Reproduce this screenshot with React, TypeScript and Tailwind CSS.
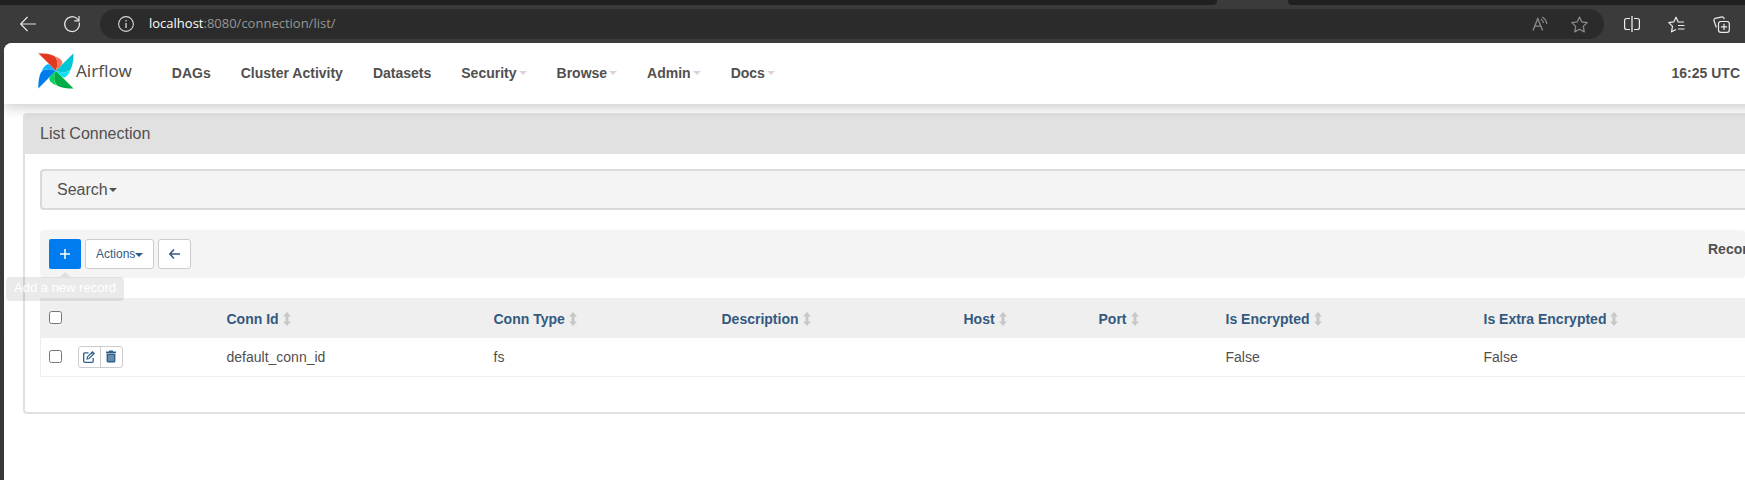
import React from "react";

const navItems = [
  { label: "DAGs", menu: false },
  { label: "Cluster Activity", menu: false },
  { label: "Datasets", menu: false },
  { label: "Security", menu: true },
  { label: "Browse", menu: true },
  { label: "Admin", menu: true },
  { label: "Docs", menu: true },
];

const columns = [
  { label: "Conn Id", width: "w-[267px]", value: "default_conn_id" },
  { label: "Conn Type", width: "w-[228px]", value: "fs" },
  { label: "Description", width: "w-[242px]", value: "" },
  { label: "Host", width: "w-[135px]", value: "" },
  { label: "Port", width: "w-[127px]", value: "" },
  { label: "Is Encrypted", width: "w-[258px]", value: "False" },
  { label: "Is Extra Encrypted", width: "", value: "False" },
];

function Caret({ className = "" }: { className?: string }) {
  return (
    <span
      aria-hidden="true"
      className={`inline-block border-x-4 border-t-4 border-x-transparent ${className}`}
    />
  );
}

function SortIcon() {
  return (
    <svg viewBox="0 0 8 14" className="h-[14px] w-2 fill-[#c8c8c8]" aria-hidden="true">
      <path d="M4 0 L8 4.600 H5.500 V9.400 H8 L4 14 L0 9.400 H2.500 V4.600 H0 Z" />
    </svg>
  );
}

function Pinwheel() {
  return (
    <svg viewBox="0 0 36 36" className="size-9" aria-hidden="true">
      <path fill="#017cee" d="M0.3 35.6 L17.8 17.8 C12 15.5 5.500 15.500 3 19.500 C1 23 0.3 29 0.3 35.6Z" />
      <path fill="#0cb6ff" d="M17.8 17.8 C13 13 11.500 10.500 9 11.500 C7 12.500 5 15 3.500 18.500 C7 15.500 12 15.500 17.8 17.800Z" />
      <path fill="#04d659" d="M17.8 17.8 C13 22.500 10.500 24.500 11.500 27 C12.500 29.500 15.500 31.500 18.800 32.500 C15.500 29 15.800 23.500 17.800 17.800Z" />
      <path fill="#00ad46" d="M35.5 35.5 L17.8 17.8 C15.500 23.500 15.500 29.500 19.500 32.700 C23 34.700 29 35.500 35.500 35.500Z" />
      <path fill="#11e1ee" d="M17.8 17.8 C22.500 22.500 24.500 25.200 27 24.200 C29.500 23.200 31.500 20.200 32.500 16.800 C29 20.200 23.500 19.800 17.800 17.800Z" />
      <path fill="#00c7d4" d="M35.5 0.3 L17.8 17.8 C23.500 20 29.500 20 32.700 16.200 C34.800 12.500 35.500 6.800 35.500 0.300Z" />
      <path fill="#ff7557" d="M17.8 17.8 C22.500 13 25.200 11 24.200 8.500 C23.200 6.200 20.200 4.200 16.800 3.200 C20.200 6.500 20 12 17.800 17.800Z" />
      <path fill="#e43921" d="M0.3 0.3 L17.8 17.8 C20 12 20 6 16.200 3 C12.500 1 6.800 0.300 0.300 0.300Z" />
    </svg>
  );
}

function BackIcon() {
  return (
    <svg viewBox="0 0 16 16" className="size-4 fill-none stroke-[#e4e4e4]" aria-hidden="true">
      <path d="M7.500 1 L0.700 8 L7.500 15 M0.700 8 H16" strokeWidth="1.2" />
    </svg>
  );
}

function ReloadIcon() {
  return (
    <svg viewBox="0 0 18 18" className="size-[18px] fill-none stroke-[#e4e4e4]" aria-hidden="true">
      <path d="M16.300 7.500 A7.400 7.400 0 1 1 14.600 4.200 L16 5.600 M16 1 V5.800 H11.200" strokeWidth="1.2" />
    </svg>
  );
}

function InfoIcon() {
  return (
    <svg viewBox="0 0 16 16" className="size-4 fill-none stroke-[#d8d8d8]" aria-hidden="true">
      <circle cx="8" cy="8" r="7.400" strokeWidth="1.100" />
      <path d="M8 7 V12" strokeWidth="1.300" />
      <circle cx="8" cy="4.800" r="0.500" strokeWidth="0.800" />
    </svg>
  );
}

function ReadAloudIcon() {
  return (
    <svg viewBox="0 0 16 16" className="size-4 fill-none stroke-[#8c8c8c]" aria-hidden="true">
      <path d="M1 14.500 L5.800 2.500 L10.600 14.500 M2.800 10.200 H8.900" strokeWidth="1.300" />
      <path d="M9 3 Q11 4.500 11.500 7 M10.300 1 Q14.200 3.400 14.800 8" strokeWidth="1.200" />
    </svg>
  );
}

const starPath =
  "M8.500 1 L10.800 5.900 L16.200 6.600 L12.300 10.400 L13.300 15.900 L8.500 13.300 L3.700 15.900 L4.700 10.400 L0.800 6.600 L6.200 5.900 Z";

function StarIcon() {
  return (
    <svg viewBox="0 0 17 17" className="size-[17px] fill-none stroke-[#8c8c8c]" aria-hidden="true">
      <path d={starPath} strokeWidth="1.200" strokeLinejoin="round" />
    </svg>
  );
}

function SplitIcon() {
  return (
    <svg viewBox="0 0 16 16" className="size-4 fill-none stroke-[#ececec]" aria-hidden="true">
      <path d="M6 2.500 H2.500 Q0.600 2.500 0.600 4.500 V11.500 Q0.600 13.500 2.500 13.500 H6 M10 2.500 H13.500 Q15.400 2.500 15.400 4.500 V11.500 Q15.400 13.500 13.500 13.500 H10" strokeWidth="1.200" />
      <path d="M8 0 V16" strokeWidth="1.300" />
    </svg>
  );
}

function FavoritesIcon() {
  return (
    <svg viewBox="0 0 17 17" className="size-[17px] fill-none stroke-[#ececec]" aria-hidden="true">
      <path d="M16 6 H10.200 L8 1.200 L5.700 5.900 L0.800 6.600 L4.500 10.300 L3.500 15.800 L8 13.500" strokeWidth="1.200" strokeLinejoin="round" />
      <path d="M10 9.500 H16.500 M10 13 H16.500" strokeWidth="1.200" />
    </svg>
  );
}

function CollectionsIcon() {
  return (
    <svg viewBox="0 0 17 17" className="size-[17px] fill-none stroke-[#ececec]" aria-hidden="true">
      <rect x="5.500" y="5.500" width="10.800" height="10.800" rx="2.300" strokeWidth="1.200" />
      <path d="M11 7.800 V14 M7.900 10.900 H14.100" strokeWidth="1.200" />
      <path d="M3.400 11.500 L1 4.800 Q0.500 3 2.200 2.300 L9 0.900 Q10.700 0.600 11.300 3.200" strokeWidth="1.200" />
    </svg>
  );
}

function EditIcon() {
  return (
    <svg viewBox="0 0 12 12" className="size-3 fill-none stroke-[#2f5f8a]" aria-hidden="true">
      <path d="M5.500 1.800 H2 Q0.700 1.800 0.700 3 V10 Q0.700 11.300 2 11.300 H9 Q10.200 11.300 10.200 10 V7" strokeWidth="1.300" />
      <path d="M4 8 L4.500 5.800 L9.500 0.800 L11.200 2.500 L6.200 7.500 Z M8.300 2 L10 3.700" strokeWidth="1.100" />
    </svg>
  );
}

function TrashIcon() {
  return (
    <svg viewBox="0 0 12 13" className="h-[13px] w-3" aria-hidden="true">
      <path fill="#2f5f8a" d="M4 0.500 H8 V1.500 H11 V3 H1 V1.500 H4 Z M1.600 3.600 H10.400 V11 Q10.400 12.500 9 12.500 H3 Q1.600 12.500 1.600 11 Z" />
      <path d="M4 5 V11 M6 5 V11 M8 5 V11" stroke="#c3cdd8" strokeWidth="0.800" />
    </svg>
  );
}

function BrowserBar() {
  return (
    <header className="bg-[#3b3b3b]">
      <div className="flex h-[5px] bg-[#3b3b3b]">
        <div className="w-[1217px] rounded-br-[4px] bg-[#202020]" />
        <div className="w-[71px]" />
        <div className="flex-1 rounded-bl-[4px] bg-[#202020]" />
      </div>
      <div className="flex h-[38px] items-center pr-[15px] pl-5">
        <button aria-label="Back"><BackIcon /></button>
        <button aria-label="Reload" className="ml-[27px]"><ReloadIcon /></button>
        <div className="ml-[19px] flex h-[30px] flex-1 items-center rounded-full bg-[#2b2b2b] pr-4 pl-[18px]">
          <InfoIcon />
          <p className="ml-[15px] flex-1 font-['Open_Sans',sans-serif] text-[13px] text-[#969696]">
            <span className="text-white">localhost</span>:8080/connection/list/
          </p>
          <button aria-label="Read aloud"><ReadAloudIcon /></button>
          <button aria-label="Add to favorites" className="ml-[23px]"><StarIcon /></button>
        </div>
        <button aria-label="Split screen" className="ml-5"><SplitIcon /></button>
        <button aria-label="Favorites" className="ml-7"><FavoritesIcon /></button>
        <button aria-label="Collections" className="ml-7"><CollectionsIcon /></button>
      </div>
    </header>
  );
}

function Navbar() {
  return (
    <nav className="relative z-10 -mr-4 flex h-[61px] items-center bg-white pr-[21px] pb-[2px] pl-[34px] shadow-[0_2px_14px_rgba(0,0,0,0.24)]">
      <a href="#home" className="mb-1 flex items-center gap-[2px] font-['Noto_Sans',sans-serif] text-[17px] text-[#51504f]">
        <Pinwheel />
        Airflow
      </a>
      <ul className="ml-10 flex gap-[30px] text-sm font-bold">
        {navItems.map((item) => (
          <li key={item.label}>
            <a href="#nav" className="flex items-center gap-[2px]">
              {item.label}
              {item.menu && <Caret className="border-t-[#e2cde2]" />}
            </a>
          </li>
        ))}
      </ul>
      <time className="ml-auto text-sm font-bold">16:25 UTC</time>
    </nav>
  );
}

function Toolbar() {
  return (
    <div className="mt-5 flex h-12 items-center gap-1 rounded-[4px] bg-[#f4f4f4] pl-[9px]">
      <div className="relative">
        <button aria-label="Add a new record" className="flex h-[30px] w-8 items-center justify-center rounded-[2px] bg-[#017cee]">
          <svg viewBox="0 0 10 10" className="size-2.5 stroke-white" aria-hidden="true">
            <path d="M5 0 V10 M0 5 H10" strokeWidth="1.500" />
          </svg>
        </button>
        <div role="tooltip" className="absolute top-[33px] left-1/2 z-10 flex -translate-x-1/2 flex-col items-center opacity-[0.08]">
          <span className="border-x-[5px] border-b-[5px] border-x-transparent border-b-black" />
          <span className="h-6 w-[118px] rounded-[4px] bg-black" />
        </div>
        <span className="absolute top-[37px] left-1/2 z-10 -translate-x-1/2 text-[13px] leading-6 whitespace-nowrap text-white">
          Add a new record
        </span>
      </div>
      <button className="flex h-[30px] items-center rounded-[3px] border border-[#cccccc] bg-white px-2.5 text-xs text-[#34597f]">
        Actions
        <Caret className="mt-[2px] border-t-[#34597f]" />
      </button>
      <button aria-label="Back to previous page" className="flex h-[30px] w-[33px] items-center justify-center rounded-[3px] border border-[#cccccc] bg-white">
        <svg viewBox="0 0 11 10" className="h-2.5 w-[11px] fill-none stroke-[#34597f]" aria-hidden="true">
          <path d="M5 0.600 L0.900 5 L5 9.400 M0.900 5 H11" strokeWidth="1.500" />
        </svg>
      </button>
      <p className="mb-2.5 ml-auto w-[37px] overflow-hidden text-sm font-bold whitespace-nowrap">Record Count: 1</p>
    </div>
  );
}

function ConnectionTable() {
  const box = "block size-[13px] accent-[#017cee]";
  return (
    <table className="mt-5 w-full table-fixed border-b border-l border-[#eeeeee] text-left text-sm">
      <thead>
        <tr className="h-10 bg-[#efefef]">
          <th className="w-[37px] pb-[2px] pl-2">
            <input type="checkbox" aria-label="Select all" className={box} />
          </th>
          <th className="w-[149px]" aria-label="Row actions" />
          {columns.map((c) => (
            <th key={c.label} className={`${c.width} p-0`}>
              <a href="#sort" className="flex items-center gap-1 pt-[2px] text-[#34597f]">
                {c.label}
                <SortIcon />
              </a>
            </th>
          ))}
        </tr>
      </thead>
      <tbody>
        <tr className="h-[38px]">
          <td className="pl-2">
            <input type="checkbox" aria-label="Select default_conn_id" className={box} />
          </td>
          <td>
            <div className="flex h-[22px] w-[45px] divide-x divide-[#cccccc] rounded-[3px] border border-[#cccccc]">
              <button aria-label="Edit record" className="flex flex-1 items-center justify-center"><EditIcon /></button>
              <button aria-label="Delete record" className="flex flex-1 items-center justify-center"><TrashIcon /></button>
            </div>
          </td>
          {columns.map((c) => (
            <td key={c.label}>{c.value}</td>
          ))}
        </tr>
      </tbody>
    </table>
  );
}

export default function App() {
  return (
    <div className="flex min-h-screen flex-col overflow-hidden bg-[#3b3835] font-['Liberation_Sans',Arial,sans-serif] text-[#51504f]">
      <BrowserBar />
      <div className="flex flex-1 bg-linear-to-b from-[#3b3b3b] to-[#3b3835] pl-1">
        <div className="flex-1 overflow-hidden rounded-tl-[8px] bg-white">
          <Navbar />
          <main className="pt-[9px] pl-[19px]">
            <section className="rounded-l-[4px] border-y-2 border-l-2 border-[#e1e1e1]">
              <h1 className="flex h-[39px] items-center bg-[#e1e1e1] pb-[2px] pl-[15px] text-base">List Connection</h1>
              <div className="pt-[15px] pb-[35px] pl-[15px]">
                <button className="flex h-[41px] w-full items-center rounded-l-[4px] border-y-2 border-l-2 border-[#dadada] bg-[#f4f4f4] pl-[15px] text-base">
                  Search
                  <Caret className="ml-px border-t-[#51504f]" />
                </button>
                <Toolbar />
                <ConnectionTable />
              </div>
            </section>
          </main>
        </div>
      </div>
    </div>
  );
}
